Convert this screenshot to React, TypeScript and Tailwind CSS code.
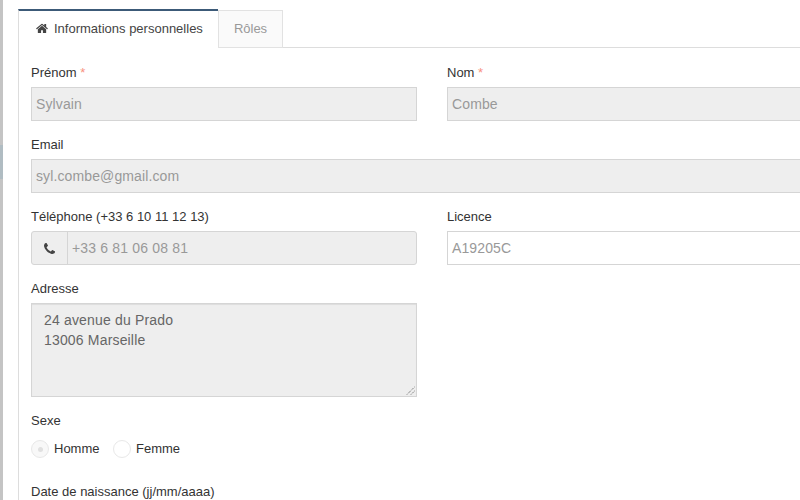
import React from "react";

const font = { fontFamily: '"Liberation Sans", Arial, sans-serif' };

function Req() {
  return <span className="text-[#f8917f]"> *</span>;
}

function Label({ children }: { children: React.ReactNode }) {
  return <div className="h-[24px] text-[13px] leading-[20px] text-[#333]">{children}</div>;
}

function Field({ value, disabled = true }: { value: string; disabled?: boolean }) {
  return (
    <div
      className={`h-[34px] w-full border border-[#d5d5d5] px-[4px] text-[14px] leading-[32px] tracking-[0.12px] text-[#999] ${
        disabled ? "bg-[#eee]" : "bg-white"
      }`}
    >
      {value}
    </div>
  );
}

export default function App() {
  return (
    <div className="h-[500px] w-[800px] overflow-hidden bg-white" style={font}>
      <div className="flex h-full">
        <div className="flex w-[18px] shrink-0 flex-col">
          <div className="h-[145px] w-[3px] bg-[#c4c4c4]" />
          <div className="h-[34px] w-[3px] bg-[#b0bcc2]" />
          <div className="w-[3px] flex-1 bg-[#c4c4c4]" />
        </div>
        <div className="min-w-0 flex-1 pt-[9px]">
          <div className="flex h-[39px] border-b border-[#ddd]">
            <div className="-mb-px flex h-[39px] w-[200px] items-center gap-[6px] border-t-2 border-l border-t-[#3c5a78] border-l-[#ddd] bg-white pb-[2px] pl-[17px] text-[13px] text-[#444]">
              <svg width="12" height="11" viewBox="0 0 1664 1408" fill="#444">
                <path d="M1408 800v480q0 26-19 45t-45 19H960V960H704v384H320q-26 0-45-19t-19-45V800l576-475zm224-69-62 74q-8 9-21 11h-3q-13 0-21-7L832 232 139 809q-12 8-24 7-13-2-21-11L32 731q-8-10-7-23.500T36 686L756 86q32-26 76-26t76 26l245 205V96q0-14 9-23t23-9h192q14 0 23 9t9 23v408l219 182q10 8 11 21.500t-7 23.500z" />
              </svg>
              <span>Informations personnelles</span>
            </div>
            <div className="mt-px flex h-[38px] w-[65px] items-center justify-center border border-[#e2e2e2] bg-[#fafafa] text-[13px] text-[#999]">
              Rôles
            </div>
          </div>

          <div className="h-full border-l border-[#ddd] pl-[12px] pt-[15px]">
            <div className="grid grid-cols-[386px_1fr] gap-x-[30px]">
              <div>
                <Label>
                  Prénom
                  <Req />
                </Label>
                <Field value="Sylvain" />
              </div>
              <div className="w-[400px]">
                <Label>
                  Nom
                  <Req />
                </Label>
                <Field value="Combe" />
              </div>
            </div>

            <div className="mt-[14px] w-[800px]">
              <Label>Email</Label>
              <Field value="syl.combe@gmail.com" />
            </div>

            <div className="mt-[14px] grid grid-cols-[386px_1fr] gap-x-[30px]">
              <div>
                <Label>Téléphone (+33 6 10 11 12 13)</Label>
                <div className="flex h-[34px] overflow-hidden rounded-[3px] border border-[#d5d5d5] bg-[#eee]">
                  <div className="flex w-[36px] items-center justify-center border-r border-[#d5d5d5]">
                    <svg width="11" height="11" viewBox="0 0 1408 1408" fill="#444">
                      <path d="M1408 1112q0 27-10 70.500t-21 68.500q-21 50-122 106-94 51-186 51-27 0-53-3.500t-57.500-12.500-47-14.500-55.500-20.500-49-18q-98-35-175-83-127-79-264-216T152 776q-48-77-83-175-3-9-18-49t-20.500-55.500T16 449 3.500 391.500 0 338q0-92 51-186Q107 51 157 30q25-11 68.500-21T296 0q14 0 21 3 18 6 53 76 11 19 30 54t35 63.500 31 53.500q3 4 17.500 25t21.500 35.500 7 28.500q0 20-28.500 50t-62 55-62 53-28.500 46q0 9 5 22.500t8.500 20.500 14 24 11.500 19q76 137 174 235t235 174q2 1 19 11.500t24 14 20.500 8.500 22.500 5q18 0 46-28.500t53-62 55-62 50-28.500q14 0 28.500 7t35.500 21.500 25 17.500q25 15 53.500 31t63.500 35 54 30q70 35 76 53 3 7 3 21z" />
                    </svg>
                  </div>
                  <div className="pl-[4px] text-[14px] leading-[32px] tracking-[0.17px] text-[#999]">+33 6 81 06 08 81</div>
                </div>
              </div>
              <div className="w-[400px]">
                <Label>Licence</Label>
                <Field value="A19205C" disabled={false} />
              </div>
            </div>

            <div className="mt-[14px] w-[386px]">
              <Label>Adresse</Label>
              <div className="relative h-[94px] border border-[#d5d5d5] bg-[#eee] pl-[12px] pt-[6px] text-[14px] leading-[20px] tracking-[0.17px] text-[#666] shadow-[inset_0_1px_1px_rgba(0,0,0,0.075)]">
                <div>24 avenue du Prado</div>
                <div>13006 Marseille</div>
                <svg className="absolute bottom-[1px] right-[1px]" width="9" height="9" viewBox="0 0 9 9" stroke="#555" strokeWidth="1" strokeDasharray="1 1">
                  <path d="M1 8.500 8.500 1M5 8.500 8.500 5" />
                </svg>
              </div>
            </div>

            <div className="mt-[14px]">
              <Label>Sexe</Label>
              <div className="mt-[5px] flex h-[18px] items-center text-[13px] text-[#333]">
                <div className="flex h-[18px] w-[18px] items-center justify-center rounded-full border border-[#e8e8e8] bg-[#f8f8f8]">
                  <div className="h-[5px] w-[5px] rounded-full bg-[#e0e0e0]" />
                </div>
                <span className="ml-[5px] w-[45px]">Homme</span>
                <div className="ml-[14px] h-[18px] w-[18px] rounded-full border border-[#e8e8e8] bg-white" />
                <span className="ml-[5px]">Femme</span>
              </div>
            </div>

            <div className="mt-[24px]">
              <Label>Date de naissance (jj/mm/aaaa)</Label>
            </div>
          </div>
        </div>
      </div>
    </div>
  );
}
